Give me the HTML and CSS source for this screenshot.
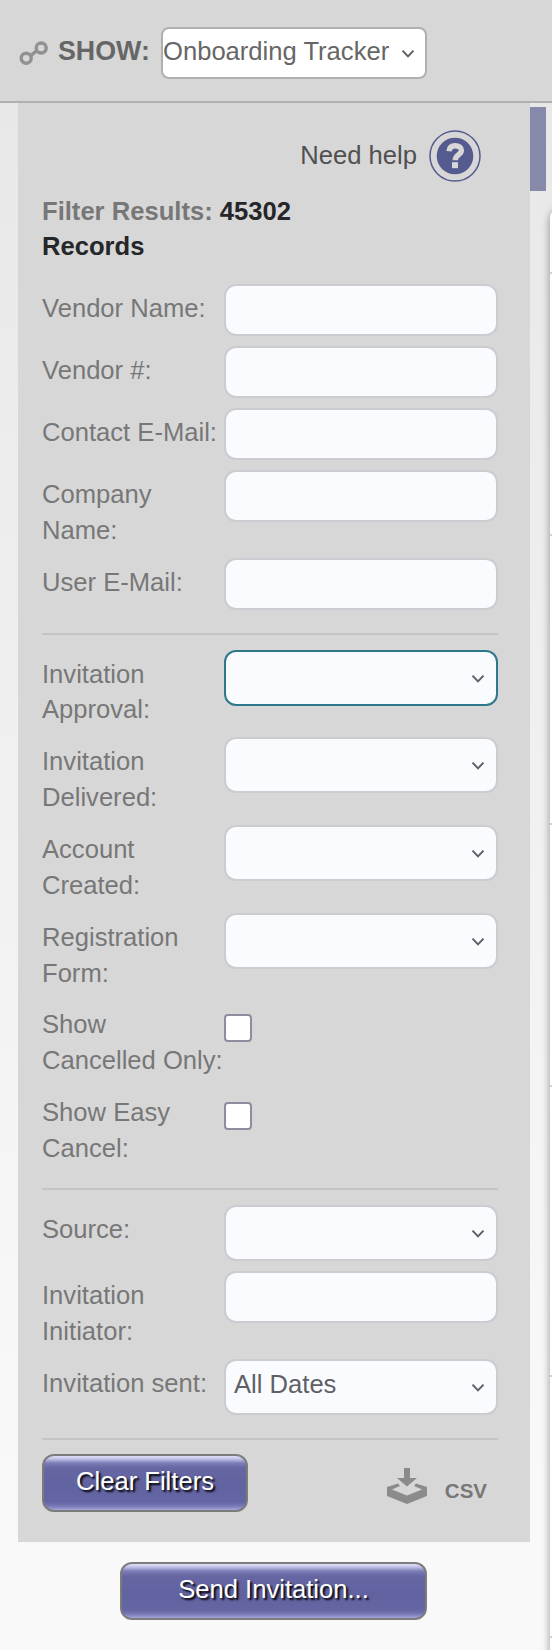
FILE: index.html
```html
<!DOCTYPE html>
<html lang="en">
<head>
<meta charset="utf-8">
<title>Onboarding Tracker</title>
<link rel="stylesheet" href="styles.css">
</head>
<body>
<svg width="0" height="0" class="defs"><symbol id="chevron" viewBox="0 0 14 10"><path d="M1.5 1.6 L7 7.4 L12.5 1.6" fill="none" stroke="currentColor" stroke-width="2"/></symbol></svg>
<header class="topbar">
  <svg class="link-icon" viewBox="0 0 30 26"><g fill="none" stroke="#919191" stroke-width="3.4"><circle cx="7.2" cy="18.2" r="5"/><circle cx="22.2" cy="8" r="5"/><path d="M11.6 15.6 L18 10.6"/></g></svg>
  <span class="show-label">SHOW:</span>
  <div class="view-select"><span>Onboarding Tracker</span><svg class="chev"><use href="#chevron"/></svg></div>
</header>
<div class="body">
  <main class="left">
    <section class="panel">
      <div class="help"><span>Need help</span>
        <svg class="help-icon" viewBox="0 0 52 52"><circle cx="26" cy="26" r="25" fill="none" stroke="#555b8e" stroke-width="1.5"/><circle cx="26" cy="26" r="18.3" fill="#555b8e"/><path d="M20 21.2 C20.4 17 23 15.8 26.2 15.8 C29.8 15.8 32.4 17.4 32.4 20.4 C32.4 24.6 26.2 24.6 26.2 30.2" fill="none" stroke="#d7d7d7" stroke-width="5.4"/><rect x="23" y="32.2" width="6" height="6" fill="#d7d7d7"/></svg>
      </div>
      <h2 class="results">Filter Results: <b>45302 Records</b></h2>
      <div class="group">
        <div class="row"><label>Vendor Name:</label><div class="field"></div></div>
        <div class="row"><label>Vendor #:</label><div class="field"></div></div>
        <div class="row"><label>Contact E-Mail:</label><div class="field"></div></div>
        <div class="row"><label>Company Name:</label><div class="field"></div></div>
        <div class="row"><label>User E-Mail:</label><div class="field"></div></div>
      </div>
      <div class="group statuses">
        <div class="row"><label>Invitation Approval:</label><div class="field select focused"><svg class="chev"><use href="#chevron"/></svg></div></div>
        <div class="row"><label>Invitation Delivered:</label><div class="field select"><svg class="chev"><use href="#chevron"/></svg></div></div>
        <div class="row"><label>Account Created:</label><div class="field select"><svg class="chev"><use href="#chevron"/></svg></div></div>
        <div class="row"><label>Registration Form:</label><div class="field select"><svg class="chev"><use href="#chevron"/></svg></div></div>
        <div class="row"><label>Show<br>Cancelled Only:</label><div class="check"></div></div>
        <div class="row"><label>Show Easy Cancel:</label><div class="check"></div></div>
      </div>
      <div class="group origin">
        <div class="row"><label>Source:</label><div class="field select"><svg class="chev"><use href="#chevron"/></svg></div></div>
        <div class="row"><label>Invitation Initiator:</label><div class="field"></div></div>
        <div class="row"><label>Invitation sent:</label><div class="field select"><span>All Dates</span><svg class="chev"><use href="#chevron"/></svg></div></div>
      </div>
      <div class="actions">
        <div class="button clear">Clear Filters</div>
        <div class="export">
          <svg class="csv-icon" viewBox="0 0 40 36"><g fill="#8b8b8b"><path d="M17 0 H23 V10 H30 L20 18.5 L10 10 H17 Z"/><path d="M11 15.5 L0 19 V28 L20 36 L40 28 V19 L29 15.5 L27 18 L35 21.5 L20 27.5 L5 21.5 L13 18 Z"/></g></svg>
          <span>CSV</span>
        </div>
      </div>
    </section>
    <div class="button send">Send Invitation...</div>
  </main>
  <aside class="side">
    <div class="tab"></div>
    <div class="table"><i class="r1"></i><i class="r2"></i><i class="r3"></i><i class="r4"></i><i class="r5"></i><i class="r6"></i></div>
  </aside>
</div>
</body>
</html>
```
FILE: styles.css
```css
* { box-sizing: border-box; }
body { margin: 0; width: 552px; height: 1650px; overflow: hidden; font-family: "Liberation Sans", Arial, sans-serif; font-size: 25.6px; line-height: 35.84px; color: #777; background: #f9f9f9; }
.defs { position: absolute; }
.topbar { height: 103px; display: flex; align-items: flex-start; padding-top: 27px; background: #d7d7d7; border-bottom: 2px solid #b0b0b0; }
.link-icon { width: 30px; height: 26px; margin: 13px 0 0 19px; }
.show-label { margin: 7px 0 0 9px; width: 103px; font-size: 26.8px; font-weight: bold; color: #666; }
.view-select { width: 266px; height: 52px; display: flex; background: #fff; border: 2px solid #b0b0b0; border-radius: 8px; color: #666; white-space: nowrap; }
.view-select span { width: 238px; padding-top: 5px; }
.chev { width: 14px; height: 10px; flex: none; color: #5f5f66; }
.view-select .chev { margin-top: 20px; }
.body { display: flex; height: 1547px; background: linear-gradient(#e8e8e8, #f9f9f9 90%); }
.left { width: 512px; margin-left: 18px; display: flex; flex-direction: column; }
.panel { height: 1439px; padding: 27px 32px 0 24px; background: #d7d7d7; }
.help { display: flex; justify-content: flex-end; gap: 12px; margin-right: 17px; height: 52px; color: #505050; }
.help span { padding-top: 8px; }
.help-icon { width: 52px; height: 52px; }
.results { margin: 12px 0 0; width: 300px; height: 90px; font-size: 25.6px; line-height: 35px; }
.results b { color: #25262a; }
.group { display: flex; flex-direction: column; gap: 10px; }
.statuses { margin-top: 23.3px; border-top: 2px solid #c4c4c4; padding-top: 14.67px; }
.origin { margin-top: 22.3px; border-top: 2px solid #c4c4c4; padding-top: 15px; }
.row { display: grid; grid-template-columns: 182px 274px; align-items: start; }
.row label { padding-top: 7px; margin-bottom: -1px; }
.field { height: 52px; border: 2px solid #cbcbd2; border-radius: 12px; background: #fafbff; }
.select { height: 56px; display: flex; padding: 0 11px 0 8px; color: #5f5f66; }
.select span { padding-top: 6px; }
.select .chev { margin: 22px 0 0 auto; }
.focused { border-color: #2f788a; }
.check { width: 28px; height: 28px; margin-top: 13.6px; background: #fff; border: 2px solid #8e8c9e; border-radius: 4px; }
.actions { display: flex; justify-content: space-between; margin-top: 23.3px; border-top: 2px solid #c4c4c4; padding-top: 14px; }
.button { height: 58px; border: 2px solid #7c7c7c; border-radius: 12px; text-align: center; line-height: 51px; color: #fff; text-shadow: 2px 2px 2px #000; background: linear-gradient(#e0e0f8 0, #c0c1e8 3px, #7d7eb7 7px, #6566a2 12px, #6162a0 30px, #6465a3 46px, #7778b6 50px, #a5a6db 54px); }
.clear { width: 206px; }
.send { width: 307px; margin: 20px 0 0 102px; }
.export { display: flex; margin-right: 11px; }
.csv-icon { width: 40px; height: 36px; margin-top: 14px; }
.export span { margin: 19px 0 0 18px; font-size: 20.5px; font-weight: bold; }
.side { width: 22px; padding-top: 4px; }
.tab { width: 16px; height: 84px; background: #8789ab; }
.table { height: 1460px; margin: 17px -20px 0 20px; background: #fff; border-radius: 10px; box-shadow: 0 2px 9px rgba(0,0,0,.4); display: flex; flex-direction: column; }
.table i { flex: none; border-bottom: 2px solid #d0d0d0; }
.r1 { height: 66px; }
.r2 { height: 262px; }
.r3 { height: 289px; }
.r4 { height: 262px; }
.r5 { height: 290px; }
.r6 { height: 261px; }
```
